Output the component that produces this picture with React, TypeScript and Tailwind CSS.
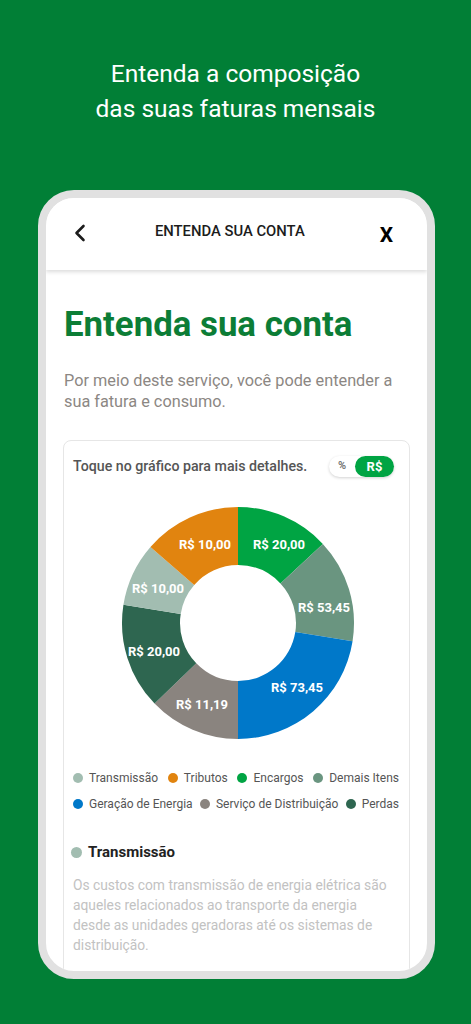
import React from 'react';

type Slice = {
  name: string;
  value: string;
  color: string;
  from: number;
  to: number;
  lx: number;
  ly: number;
};

// angles read clockwise from 12 o'clock
const slices: Slice[] = [
  { name: 'Encargos', value: 'R$ 20,00', color: '#00a443', from: 0, to: 47, lx: 161, ly: 41 },
  { name: 'Demais Itens', value: 'R$ 53,45', color: '#6a9580', from: 47, to: 99, lx: 206, ly: 104 },
  { name: 'Geração de Energia', value: 'R$ 73,45', color: '#0078c9', from: 99, to: 180, lx: 179, ly: 184 },
  { name: 'Serviço de Distribuição', value: 'R$ 11,19', color: '#8a847f', from: 180, to: 226, lx: 84, ly: 201 },
  { name: 'Perdas', value: 'R$ 20,00', color: '#2e6650', from: 226, to: 279, lx: 36, ly: 148 },
  { name: 'Transmissão', value: 'R$ 10,00', color: '#a2bdb1', from: 279, to: 311, lx: 40, ly: 85 },
  { name: 'Tributos', value: 'R$ 10,00', color: '#e1840f', from: 311, to: 360, lx: 87, ly: 41 },
];

const legendRows = [
  [
    { name: 'Transmissão', color: '#a2bdb1' },
    { name: 'Tributos', color: '#e1840f' },
    { name: 'Encargos', color: '#00a443' },
    { name: 'Demais Itens', color: '#6a9580' },
  ],
  [
    { name: 'Geração de Energia', color: '#0078c9' },
    { name: 'Serviço de Distribuição', color: '#8a847f' },
    { name: 'Perdas', color: '#2e6650' },
  ],
];

const CX = 120;
const CY = 120;
const R = 116;
const r = 58;

const pt = (deg: number, rad: number) => {
  const a = (deg * Math.PI) / 180;
  return `${(CX + rad * Math.sin(a)).toFixed(2)} ${(CY - rad * Math.cos(a)).toFixed(2)}`;
};

const arcPath = (from: number, to: number) => {
  const large = to - from > 180 ? 1 : 0;
  return [
    `M ${pt(from, R)}`,
    `A ${R} ${R} 0 ${large} 1 ${pt(to, R)}`,
    `L ${pt(to, r)}`,
    `A ${r} ${r} 0 ${large} 0 ${pt(from, r)}`,
    'Z',
  ].join(' ');
};

const Donut: React.FC = () => (
  <svg width="240" height="240" viewBox="0 0 240 240" className="block">
    {slices.map((s) => (
      <path key={s.name} d={arcPath(s.from, s.to)} fill={s.color} />
    ))}
    {slices.map((s) => (
      <text
        key={`${s.name}-label`}
        x={s.lx}
        y={s.ly}
        textAnchor="middle"
        dominantBaseline="central"
        fill="#ffffff"
        fontFamily="Roboto, sans-serif"
        fontWeight={700}
        fontSize="13"
      >
        {s.value}
      </text>
    ))}
  </svg>
);

const App: React.FC = () => {
  return (
    <div className="w-full h-[1024px] bg-[#017f36] flex flex-col items-center overflow-hidden font-['Roboto',sans-serif]">
      {/* Headline */}
      <h1 className="pt-[56px] text-center text-white text-[24.5px] leading-[35px] font-normal">
        Entenda a composição
        <br />
        das suas faturas mensais
      </h1>

      {/* Phone frame */}
      <div className="mt-[64px] ml-[2px] w-[397px] h-[789px] border-8 border-[#e1e1e1] rounded-[36px] bg-white overflow-hidden flex flex-col">
        {/* App bar */}
        <div className="relative z-10 h-[72px] shrink-0 bg-white flex items-center pl-[28px] pr-[34px] shadow-[0_2px_4px_rgba(0,0,0,0.14)]">
          <svg width="12" height="18" viewBox="0 0 12 18" className="mt-[-2px] shrink-0">
            <polyline
              points="9.5,2 2.5,9 9.5,16"
              fill="none"
              stroke="#1c1c1c"
              strokeWidth="2.6"
              strokeLinecap="round"
              strokeLinejoin="round"
            />
          </svg>
          <span className="flex-1 text-center text-[14.8px] font-medium text-[#1c1c1c] mt-[-5px] pr-[6px]">
            ENTENDA SUA CONTA
          </span>
          <span className="text-[21px] font-bold text-black leading-none mt-[3px]">X</span>
        </div>

        {/* Content */}
        <div className="flex-1 px-[17px]">
          <h2 className="mt-[34px] pl-[1px] text-[34.8px] leading-[40px] font-bold text-[#0c7d36]">
            Entenda sua conta
          </h2>
          <p className="mt-[26px] pl-[1px] text-[16.3px] leading-[21px] text-[#8c8783]">
            Por meio deste serviço, você pode entender a sua fatura e consumo.
          </p>

          {/* Card */}
          <div className="mt-[28px] border border-[#e6e6e6] rounded-[8px] pt-[15px] pl-[9px] pr-[10px]">
            <div className="flex items-center justify-between h-[21px]">
              <span className="text-[14.2px] font-medium text-[#555555]">
                Toque no gráfico para mais detalhes.
              </span>
              <div className="w-[65px] h-[21px] mr-[5px] rounded-full bg-white shadow-[0_1px_3px_rgba(0,0,0,0.18)] flex items-center">
                <span className="w-[26px] text-center text-[11px] font-bold text-[#777777]">%</span>
                <span className="ml-auto w-[39px] h-full rounded-full bg-[#00a443] text-white text-[13px] font-bold flex items-center justify-center">
                  R$
                </span>
              </div>
            </div>

            <div className="mt-[26px] flex justify-center pl-[3px]">
              <Donut />
            </div>

            {/* Legend */}
            <div className="mt-[26px] flex flex-col gap-[8px]">
              {legendRows.map((row, i) => (
                <div key={i} className="flex justify-between h-[18px] items-center">
                  {row.map((item) => (
                    <div key={item.name} className="flex items-center gap-[6px]">
                      <span
                        className="w-[10px] h-[10px] rounded-full"
                        style={{ backgroundColor: item.color }}
                      />
                      <span className="text-[12px] text-[#555555] whitespace-nowrap">{item.name}</span>
                    </div>
                  ))}
                </div>
              ))}
            </div>

            {/* Selected detail */}
            <div className="mt-[28px] flex items-center gap-[6px] h-[22px]">
              <span className="w-[11px] h-[11px] rounded-full bg-[#a2bdb1] ml-[-2px]" />
              <span className="text-[15px] font-bold text-[#222222]">Transmissão</span>
            </div>
            <p className="mt-[12px] text-[13.8px] leading-[20px] text-[#c2c2c2] whitespace-nowrap">
              Os custos com transmissão de energia elétrica são
              <br />
              aqueles relacionados ao transporte da energia
              <br />
              desde as unidades geradoras até os sistemas de
              <br />
              distribuição.
            </p>
            <div className="h-[40px]" />
          </div>
        </div>
      </div>
    </div>
  );
};

export default App;
